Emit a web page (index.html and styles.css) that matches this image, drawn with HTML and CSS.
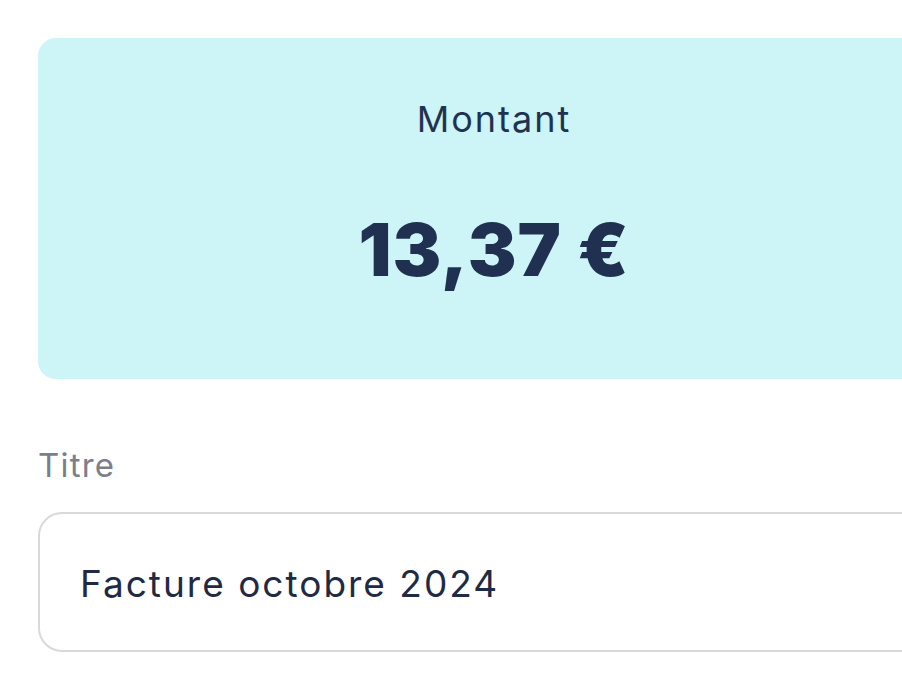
FILE: index.html
```html
<!DOCTYPE html>
<html lang="fr">
<head>
<meta charset="utf-8">
<link rel="stylesheet" href="styles.css">
</head>
<body>
<main class="page">
  <section class="amount-card">
    <div class="amount-label">Montant</div>
    <div class="amount-value">13,37 €</div>
  </section>
  <div class="field">
    <label class="field-label">Titre</label>
    <div class="field-input">Facture octobre 2024</div>
  </div>
</main>
</body>
</html>
```
FILE: styles.css
```css
html, body {
  margin: 0;
  padding: 0;
  background: #ffffff;
  overflow: hidden;
}
.page {
  width: 912px;
  padding: 38px 0 0 38px;
  font-family: Inter, "Noto Sans", sans-serif;
  color: #1f2f4f;
}
.amount-card {
  box-sizing: border-box;
  height: 341px;
  background: #cdf4f7;
  border-radius: 18px;
  padding-top: 63px;
  text-align: center;
}
.amount-label {
  font-size: 36px;
  line-height: 36px;
  font-weight: 400;
  letter-spacing: 2px;
  color: #1f3350;
}
.amount-value {
  margin-top: 76px;
  font-size: 73px;
  line-height: 73px;
  font-weight: 900;
  color: #1f3050;
  letter-spacing: 1px;
}
.field {
  margin-top: 70px;
}
.field-label {
  display: block;
  font-size: 33px;
  line-height: 33px;
  letter-spacing: 1.2px;
  color: #7b7f8c;
}
.field-input {
  box-sizing: border-box;
  margin-top: 30px;
  height: 140px;
  border: 2px solid #d9d9d9;
  border-radius: 24px;
  padding: 3px 0 0 40px;
  display: flex;
  align-items: center;
  font-size: 37px;
  line-height: 37px;
  letter-spacing: 2px;
  color: #1f2a45;
}
```
